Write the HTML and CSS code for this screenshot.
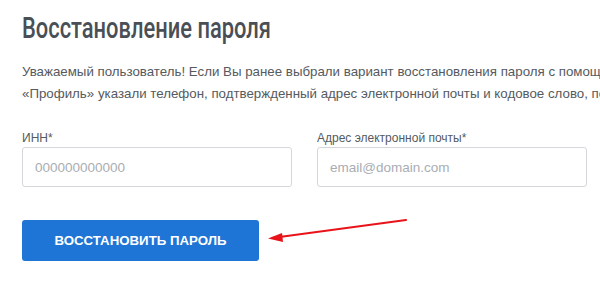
FILE: index.html
```html
<!DOCTYPE html>
<html lang="ru">
<head>
<meta charset="utf-8">
<title>Восстановление пароля</title>
<link rel="stylesheet" href="styles.css">
</head>
<body>
<div class="page">
  <h1 class="title">Восстановление пароля</h1>
  <p class="intro">Уважаемый пользователь! Если Вы ранее выбрали вариант восстановления пароля с помощью электронной почты и в разделе<br>«Профиль» указали телефон, подтвержденный адрес электронной почты и кодовое слово, пожалуйста, заполните поля ниже.</p>
  <form class="form">
    <div class="fields">
      <label class="field">
        <span class="label">ИНН*</span>
        <input class="input" type="text" placeholder="000000000000">
      </label>
      <label class="field">
        <span class="label">Адрес электронной почты*</span>
        <input class="input" type="text" placeholder="email@domain.com">
      </label>
    </div>
    <button class="submit" type="button">Восстановить пароль</button>
  </form>
  <svg class="arrow" width="150" height="30" viewBox="0 0 150 30">
    <line x1="140" y1="3" x2="6" y2="21" stroke="#e8141a" stroke-width="2.2" stroke-linecap="round"/>
    <polygon points="2,21.5 16,16 17,25" fill="#e8141a"/>
  </svg>
</div>
</body>
</html>
```
FILE: styles.css
```css
html, body {
  margin: 0;
  padding: 0;
  background: #ffffff;
  overflow: hidden;
}
.page {
  position: relative;
  width: 1000px;
  padding: 10px 0 0 22px;
  font-family: "Liberation Sans", Arial, sans-serif;
}
.title {
  margin: 0;
  width: max-content;
  font-family: Roboto, "DejaVu Sans Condensed", sans-serif;
  font-weight: 500;
  font-size: 29px;
  line-height: 36px;
  color: #4a4f56;
  transform: scaleX(0.755);
  transform-origin: 0 50%;
}
.intro {
  margin: 15px 0 0;
  font-size: 13.3px;
  line-height: 22px;
  color: #555a60;
  white-space: nowrap;
}
.form {
  margin-top: 26px;
}
.fields {
  display: flex;
  gap: 25px;
}
.field {
  display: flex;
  flex-direction: column;
  width: 270px;
}
.label {
  font-size: 12px;
  line-height: 14px;
  color: #555a60;
  margin-bottom: 2px;
}
.input {
  box-sizing: border-box;
  width: 270px;
  height: 40px;
  border: 1px solid #d5d7da;
  border-radius: 3px;
  padding: 0 12px;
  font-family: "Liberation Sans", Arial, sans-serif;
  font-size: 13.5px;
  color: #333;
  outline: none;
}
.input::placeholder {
  color: #a9adb2;
}
.submit {
  margin-top: 33px;
  width: 237px;
  height: 41px;
  border: 0;
  border-radius: 3px;
  background: #1e75d6;
  color: #ffffff;
  font-family: "Liberation Sans", Arial, sans-serif;
  font-weight: 700;
  font-size: 13.25px;
  text-transform: uppercase;
  cursor: pointer;
}
.arrow {
  position: absolute;
  left: 266px;
  top: 217px;
}
```
